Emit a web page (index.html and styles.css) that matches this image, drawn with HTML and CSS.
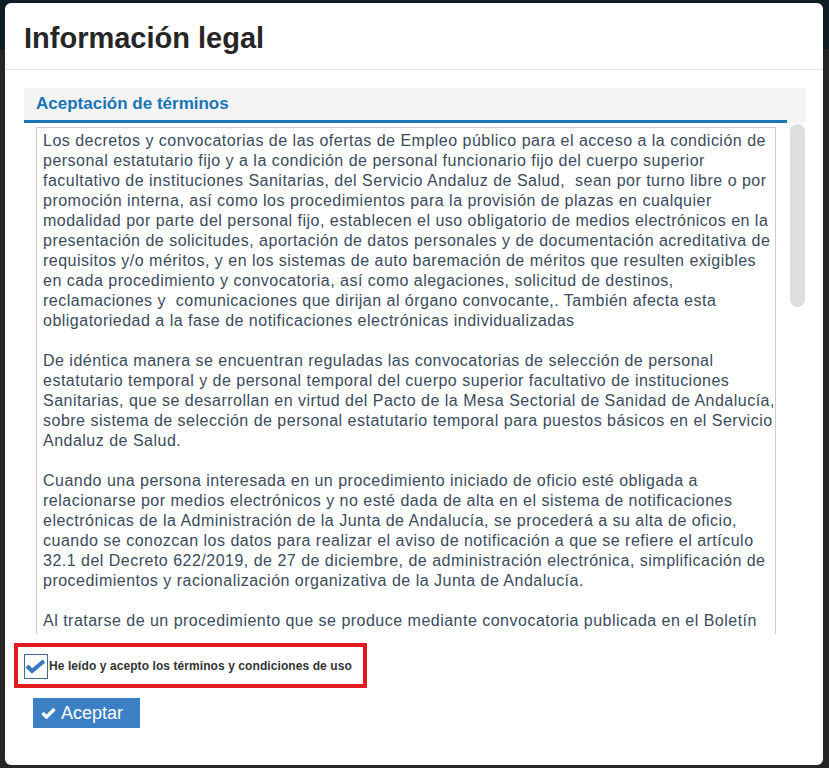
FILE: index.html
```html
<!DOCTYPE html>
<html lang="es">

<head>
  <meta charset="UTF-8" />
  <meta name="viewport" content="width=device-width, initial-scale=1.0" />
  <title>Información legal</title>
  <link rel="stylesheet" href="styles.css">
</head>

<body>
  <div class="modal">
    <div class="modal-header">
      <h1>Información legal</h1>
    </div>
    <div class="modal-body">
      <div class="terms-head">
        <h2>Aceptación de términos</h2>
      </div>
      <div class="terms-scroll">
        <div class="terms-view">
          <div class="terms-text">
            <p>Los decretos y convocatorias de las ofertas de Empleo público para el acceso a la condición de personal estatutario fijo y a la condición de personal funcionario fijo del cuerpo superior facultativo de instituciones Sanitarias, del Servicio Andaluz de Salud,&nbsp; sean por turno libre o por promoción interna, así como los procedimientos para la provisión de plazas en cualquier modalidad por parte del personal fijo, establecen el uso obligatorio de medios electrónicos en la presentación de solicitudes, aportación de datos personales y de documentación acreditativa de requisitos y/o méritos, y en los sistemas de auto baremación de méritos que resulten exigibles en cada procedimiento y convocatoria, así como alegaciones, solicitud de destinos, reclamaciones y&nbsp; comunicaciones que dirijan al órgano convocante,. También afecta esta obligatoriedad a la fase de notificaciones electrónicas individualizadas</p>
            <p>De idéntica manera se encuentran reguladas las convocatorias de selección de personal estatutario temporal y de personal temporal del cuerpo superior facultativo de instituciones Sanitarias, que se desarrollan en virtud del Pacto de la Mesa Sectorial de Sanidad de Andalucía, sobre sistema de selección de personal estatutario temporal para puestos básicos en el Servicio Andaluz de Salud.</p>
            <p>Cuando una persona interesada en un procedimiento iniciado de oficio esté obligada a relacionarse por medios electrónicos y no esté dada de alta en el sistema de notificaciones electrónicas de la Administración de la Junta de Andalucía, se procederá a su alta de oficio, cuando se conozcan los datos para realizar el aviso de notificación a que se refiere el artículo 32.1 del Decreto 622/2019, de 27 de diciembre, de administración electrónica, simplificación de procedimientos y racionalización organizativa de la Junta de Andalucía.</p>
            <p>Al tratarse de un procedimiento que se produce mediante convocatoria publicada en el Boletín Oficial de la Junta de Andalucía, las notificaciones y comunicaciones se realizarán a través de los medios electrónicos habilitados para ello.</p>
          </div>
        </div>
        <div class="scroll-track">
          <div class="scroll-thumb"></div>
        </div>
      </div>

      <label class="accept-row">
        <span class="check-box">
          <svg width="22" height="16" viewBox="0 0 22 16">
            <polyline points="2,7 7,12 19,2" fill="none" stroke="#3b78c2" stroke-width="4" />
          </svg>
        </span>
        <span class="accept-label">He leído y acepto los términos y condiciones de uso</span>
      </label>

      <div>
        <button class="btn-accept">
          <svg width="15" height="12" viewBox="0 0 15 12">
            <polyline points="1.5,6 5.5,10 13.5,2" fill="none" stroke="#fff" stroke-width="3.4" />
          </svg>
          Aceptar
        </button>
      </div>
    </div>
  </div>
</body>

</html>
```
FILE: styles.css
```css
* {
  box-sizing: border-box;
}

body {
  margin: 0;
  padding: 3px 6px 3px 5px;
  background: linear-gradient(#0e1c24 0, #0e1c24 49px, #262626 49px);
  font-family: "Liberation Sans", Arial, sans-serif;
}

.modal {
  height: 762px;
  background: #fff;
  border-radius: 6px;
}

.modal-header {
  height: 67px;
  padding: 19px 19px 0 19px;
  border-bottom: 1px solid #e5e5e5;
}

.modal-header h1 {
  margin: 0;
  font-size: 29px;
  line-height: 33px;
  color: #262626;
}

.modal-body {
  padding: 18px 17px 0 19px;
}

.terms-head {
  background: #f4f4f4;
}

.terms-head h2 {
  margin: 0 19px 0 0;
  padding: 0 12px;
  height: 35px;
  line-height: 32px;
  font-size: 17px;
  color: #1a75b5;
  border-bottom: 3px solid #1a75b5;
}

.terms-scroll {
  display: flex;
  height: 511px;
}

.terms-view {
  flex: 1;
  overflow: hidden;
  padding: 4px 12px 0 12px;
}

.terms-text {
  border: 1px solid #ccc;
  padding: 3px 0 3px 6px;
  min-height: 1423px;
  font-size: 16px;
  line-height: 20px;
  letter-spacing: 0.49px;
  color: #3b4b5d;
}

.terms-text p {
  margin: 0 0 20px 0;
}

.scroll-track {
  width: 18px;
  padding: 1px 1px 0 2px;
}

.scroll-thumb {
  height: 183px;
  background: #dedede;
  border-radius: 8px;
}

.accept-row {
  display: flex;
  align-items: flex-start;
  width: 353px;
  height: 45px;
  margin: 9px 0 0 -10px;
  padding: 7px 0 0 6px;
  border: 4px solid #e21b23;
  cursor: pointer;
}

.check-box {
  width: 24px;
  height: 25px;
  border: 1px solid #46698f;
  display: flex;
  align-items: center;
  justify-content: flex-start;
}

.check-box svg {
  display: block;
}

.accept-label {
  margin-left: 1px;
  font-size: 12px;
  font-weight: bold;
  line-height: 25px;
  letter-spacing: 0.08px;
  color: #333;
}

.btn-accept {
  margin: 10px 0 0 9px;
  width: 107px;
  height: 30px;
  padding: 0 0 0 8px;
  display: flex;
  align-items: center;
  gap: 5px;
  border: none;
  background: #3b7fc4;
  color: #fff;
  font-family: "Liberation Sans", Arial, sans-serif;
  font-size: 18px;
  cursor: pointer;
}
```
